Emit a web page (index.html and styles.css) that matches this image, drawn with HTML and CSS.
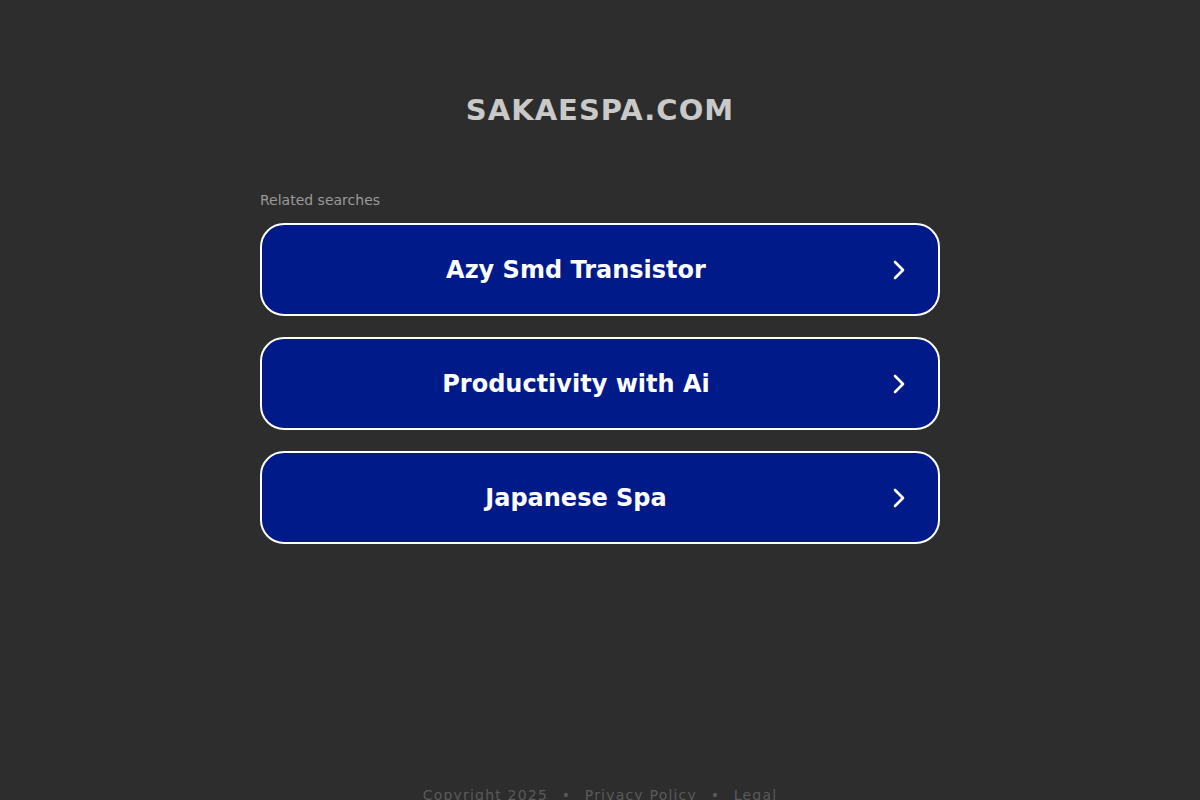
FILE: index.html
```html
<!DOCTYPE html>
<html>
<head>
<meta charset="utf-8">
<link rel="stylesheet" href="styles.css">
</head>
<body>
<div class="page">
  <header class="head"><h1 class="domain">SAKAESPA.COM</h1></header>
  <main class="main">
    <div class="label">Related searches</div>
    <div class="list">
      <a class="item" href="#"><span class="txt">Azy Smd Transistor</span><svg class="chev" width="16" height="24" viewBox="0 0 16 24"><path d="M4 4 L12 12 L4 20" fill="none" stroke="#fff" stroke-width="2.6" stroke-linecap="round" stroke-linejoin="round"/></svg></a>
      <a class="item" href="#"><span class="txt">Productivity with Ai</span><svg class="chev" width="16" height="24" viewBox="0 0 16 24"><path d="M4 4 L12 12 L4 20" fill="none" stroke="#fff" stroke-width="2.6" stroke-linecap="round" stroke-linejoin="round"/></svg></a>
      <a class="item" href="#"><span class="txt">Japanese Spa</span><svg class="chev" width="16" height="24" viewBox="0 0 16 24"><path d="M4 4 L12 12 L4 20" fill="none" stroke="#fff" stroke-width="2.6" stroke-linecap="round" stroke-linejoin="round"/></svg></a>
    </div>
  </main>
  <footer class="foot">Copyright 2025 <span class="dot">•</span> Privacy Policy <span class="dot">•</span> Legal</footer>
</div>
</body>
</html>
```
FILE: styles.css
```css
html, body { margin: 0; padding: 0; }
body {
  background: #2d2d2d;
  font-family: "DejaVu Sans", sans-serif;
  height: 800px;
  overflow: hidden;
}
.page {
  display: flex;
  flex-direction: column;
  align-items: center;
}
.head { padding-top: 92px; height: 99px; }
.domain {
  margin: 0;
  font-size: 29px;
  font-weight: bold;
  color: #c9c9c9;
  letter-spacing: 1px;
  line-height: 36px;
}
.main { width: 680px; }
.label {
  color: #9a9a9a;
  font-size: 14px;
  line-height: 18px;
  height: 32px;
}
.list { display: flex; flex-direction: column; gap: 21px; }
.item {
  box-sizing: border-box;
  height: 93px;
  border: 2px solid #ffffff;
  border-radius: 24px;
  background: #011a8a;
  display: flex;
  align-items: center;
  justify-content: center;
  position: relative;
  text-decoration: none;
}
.txt {
  color: #ffffff;
  font-size: 24px;
  font-weight: bold;
  margin-left: -48px;
}
.chev { position: absolute; right: 31px; top: 33px; }
.foot {
  margin-top: 242px;
  color: #5a5a5a;
  font-size: 14px;
  letter-spacing: 1.2px;
  line-height: 18px;
}
.dot { margin: 0 8px; }
```
